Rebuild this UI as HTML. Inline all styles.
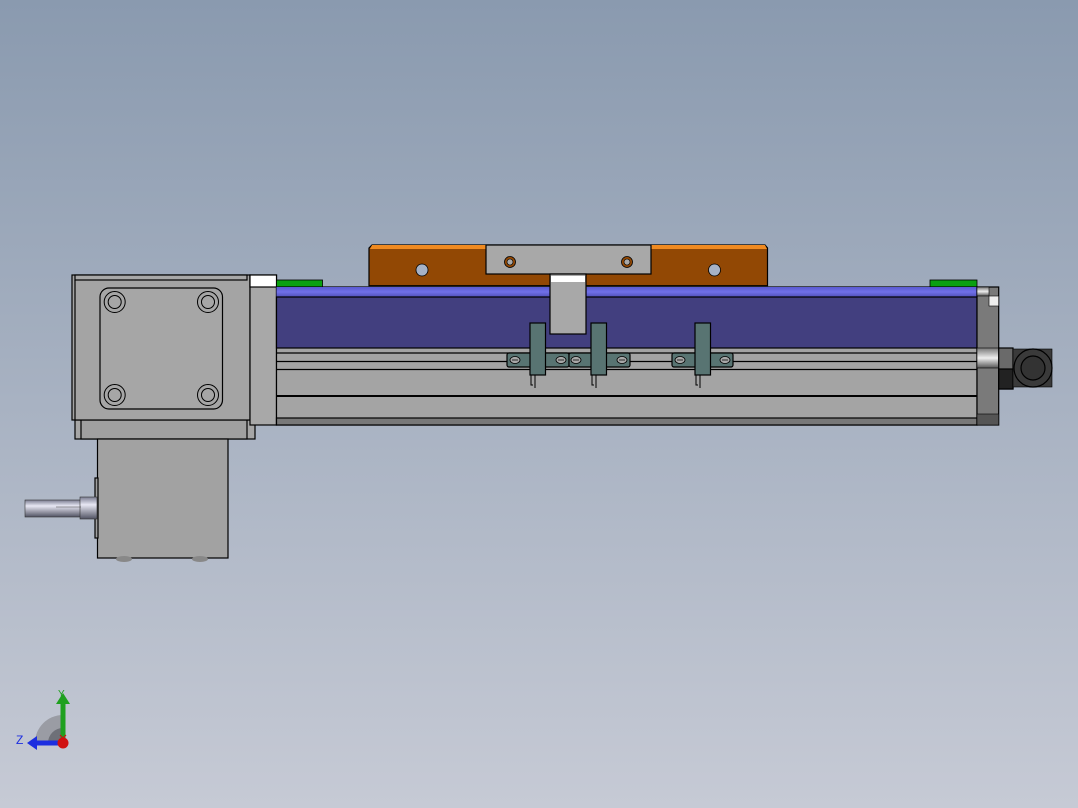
<!DOCTYPE html>
<html><head><meta charset="utf-8"><style>
html,body{margin:0;padding:0;width:1078px;height:808px;overflow:hidden}
svg{display:block}
</style></head><body>
<svg width="1078" height="808" viewBox="0 0 1078 808" xmlns="http://www.w3.org/2000/svg" font-family="Liberation Sans, sans-serif">
<defs>
<linearGradient id="bg" x1="0" y1="0" x2="0" y2="1"><stop offset="0" stop-color="#8a9aaf"/><stop offset="1" stop-color="#c6cad5"/></linearGradient>
<linearGradient id="bt" x1="0" y1="0" x2="0" y2="1"><stop offset="0" stop-color="#5a5ad0"/><stop offset="0.5" stop-color="#7070e8"/><stop offset="1" stop-color="#5050b8"/></linearGradient>
<linearGradient id="sh" x1="0" y1="0" x2="0" y2="1"><stop offset="0" stop-color="#7a7c90"/><stop offset="0.35" stop-color="#e8e8f4"/><stop offset="1" stop-color="#505262"/></linearGradient>
<linearGradient id="cy" x1="0" y1="0" x2="0" y2="1"><stop offset="0" stop-color="#777"/><stop offset="0.5" stop-color="#eee"/><stop offset="1" stop-color="#555"/></linearGradient>
</defs>
<rect width="1078" height="808" fill="url(#bg)"/>
<g stroke="#000" stroke-width="1.2">
<!-- lower gearbox -->
<rect x="75" y="420" width="180" height="19" fill="#a6a6a6"/>
<rect x="81" y="420" width="166" height="19" fill="#a0a0a0"/>
<rect x="97.5" y="439" width="130.5" height="119" fill="#a2a2a2"/>
<rect x="95" y="478" width="3" height="60" fill="#a0a0a0"/>
<ellipse cx="124" cy="559" rx="8" ry="3" fill="#888" stroke="none"/>
<ellipse cx="200" cy="559" rx="8" ry="3" fill="#888" stroke="none"/>
<rect x="25" y="500" width="56" height="17" fill="url(#sh)" stroke="#333" stroke-width="0.6"/>
<rect x="80" y="497" width="17" height="22" fill="url(#sh)" stroke="#333" stroke-width="0.6"/>
<path d="M56 507H81" stroke="#444" stroke-width="0.6" fill="none"/>
<!-- upper gearbox -->
<rect x="72" y="275" width="178" height="145" fill="#a4a4a4"/>
<rect x="75" y="275" width="172" height="5" fill="#a8a8a8"/>
<path d="M75 280V420" fill="none"/>
<rect x="100" y="288" width="122.5" height="121" rx="9" fill="#a6a6a6"/>
<g fill="none" stroke-width="1">
<circle cx="114.7" cy="302" r="10.5"/><circle cx="114.7" cy="302" r="6.5"/>
<circle cx="208" cy="302" r="10.5"/><circle cx="208" cy="302" r="6.5"/>
<circle cx="114.7" cy="395" r="10.5"/><circle cx="114.7" cy="395" r="6.5"/>
<circle cx="208" cy="395" r="10.5"/><circle cx="208" cy="395" r="6.5"/>
</g>
<rect x="250" y="275" width="26.5" height="150" fill="#a8a8a8"/>
<rect x="250" y="275" width="26.5" height="12" fill="#fff"/>
<!-- green pads -->
<rect x="276.5" y="280" width="46" height="7" fill="#0aa010" stroke-width="0.8"/>
<rect x="930" y="280" width="47" height="7" fill="#0aa010" stroke-width="0.8"/>
<!-- carriage -->
<path d="M369 248L372 245H765L767.5 248V285.7H369Z" fill="#924804"/>
<path d="M372 245H486V249H370Z" fill="#f08a20" stroke="none"/>
<path d="M651 245H765L767 249H651Z" fill="#f08a20" stroke="none"/>
<rect x="486" y="245" width="165" height="29" fill="#a8a8a8"/>
<circle cx="422" cy="270" r="6" fill="#a6b2c6" stroke-width="0.8"/>
<circle cx="714.5" cy="270" r="6" fill="#a6b2c6" stroke-width="0.8"/>
<circle cx="510" cy="262" r="5.5" fill="#924804" stroke="#000" stroke-width="0.8"/>
<circle cx="510" cy="262" r="3" fill="#a8a8a8" stroke="#000" stroke-width="0.6"/>
<circle cx="627" cy="262" r="5.5" fill="#924804" stroke="#000" stroke-width="0.8"/>
<circle cx="627" cy="262" r="3" fill="#a8a8a8" stroke="#000" stroke-width="0.6"/>
<!-- beam -->
<rect x="276.5" y="287" width="700.5" height="138" fill="#a4a4a4"/>
<rect x="276.5" y="287" width="700.5" height="10" fill="url(#bt)" stroke="none"/>
<rect x="276.5" y="297" width="700.5" height="51" fill="#423f7f"/>
<path d="M276.5 353H977M276.5 361.5H977M276.5 369.5H977" fill="none"/>
<path d="M276.5 396H977" fill="none" stroke-width="2"/>
<rect x="276.5" y="418" width="700.5" height="7" fill="#787878"/>
<!-- center tab -->
<rect x="550" y="274" width="36" height="60" fill="#a8a8a8"/>
<rect x="551" y="276" width="34" height="6" fill="#fff" stroke="none"/>
<!-- end plate -->
<rect x="977" y="287" width="21.7" height="138" fill="#7a7a7a"/>
<rect x="977" y="287" width="12" height="9" fill="url(#cy)" stroke-width="0.6"/>
<rect x="989" y="296" width="9.7" height="10" fill="#eee" stroke-width="0.6"/>
<rect x="977" y="348" width="21.7" height="20" fill="url(#cy)" stroke-width="0.6"/>
<rect x="977" y="414" width="21.7" height="11" fill="#555" stroke-width="0.6"/>
<rect x="998.7" y="348" width="14.3" height="41" fill="#6a6a6a"/>
<rect x="998.7" y="369" width="14.3" height="20" fill="#222"/>
<rect x="1013" y="349" width="39" height="38" fill="#3a3a3a" stroke-width="0.6"/>
<circle cx="1033" cy="368" r="19" fill="#3a3a3a"/>
<circle cx="1033" cy="368" r="12" fill="#333"/>
<!-- sensors -->
<g fill="#587472">
<rect x="507" y="353" width="62" height="14" rx="2"/>
<rect x="569" y="353" width="61" height="14" rx="2"/>
<rect x="672" y="353" width="61" height="14" rx="2"/>
</g>
<g fill="#a8a8a8" stroke-width="0.8">
<ellipse cx="515" cy="360" rx="5" ry="3.5"/><ellipse cx="561" cy="360" rx="5" ry="3.5"/>
<ellipse cx="576" cy="360" rx="5" ry="3.5"/><ellipse cx="622" cy="360" rx="5" ry="3.5"/>
<ellipse cx="680" cy="360" rx="5" ry="3.5"/><ellipse cx="725" cy="360" rx="5" ry="3.5"/>
</g>
<g fill="none" stroke-width="0.7"><path d="M512 360H518M558 360H564M573 360H579M619 360H625M677 360H683M722 360H728"/></g>
<g fill="#587472">
<rect x="530" y="323" width="15.5" height="52"/>
<rect x="591" y="323" width="15.5" height="52"/>
<rect x="695" y="323" width="15.5" height="52"/>
</g>
<g fill="none" stroke-width="1"><path d="M531 375V385H533M535 375V388M592 375V385H594M596 375V388M696 375V385H698M700 375V388"/></g>
</g>
<!-- triad -->
<path d="M35 743A28 28 0 0 1 63 715V743Z" fill="#9a9ca4"/>
<path d="M48 743A15 15 0 0 1 63 728V743Z" fill="#6e7078"/>
<rect x="60.5" y="702" width="5" height="41" fill="#1fa01f"/>
<path d="M56 704L63 693L70 704Z" fill="#1fa01f"/>
<rect x="35" y="740.5" width="28" height="5" fill="#1c2ee0"/>
<path d="M37 736L27 743L37 750Z" fill="#1c2ee0"/>
<circle cx="63" cy="743" r="5.5" fill="#d01010"/>
<path d="M60 735L66 741M66 735L60 741" stroke="#d01010" stroke-width="1.2"/>
<text x="16" y="744" font-size="12" fill="#1c2ee0">Z</text>
<text x="58" y="697" font-size="10" fill="#1fa01f">Y</text>
</svg>
</body></html>
